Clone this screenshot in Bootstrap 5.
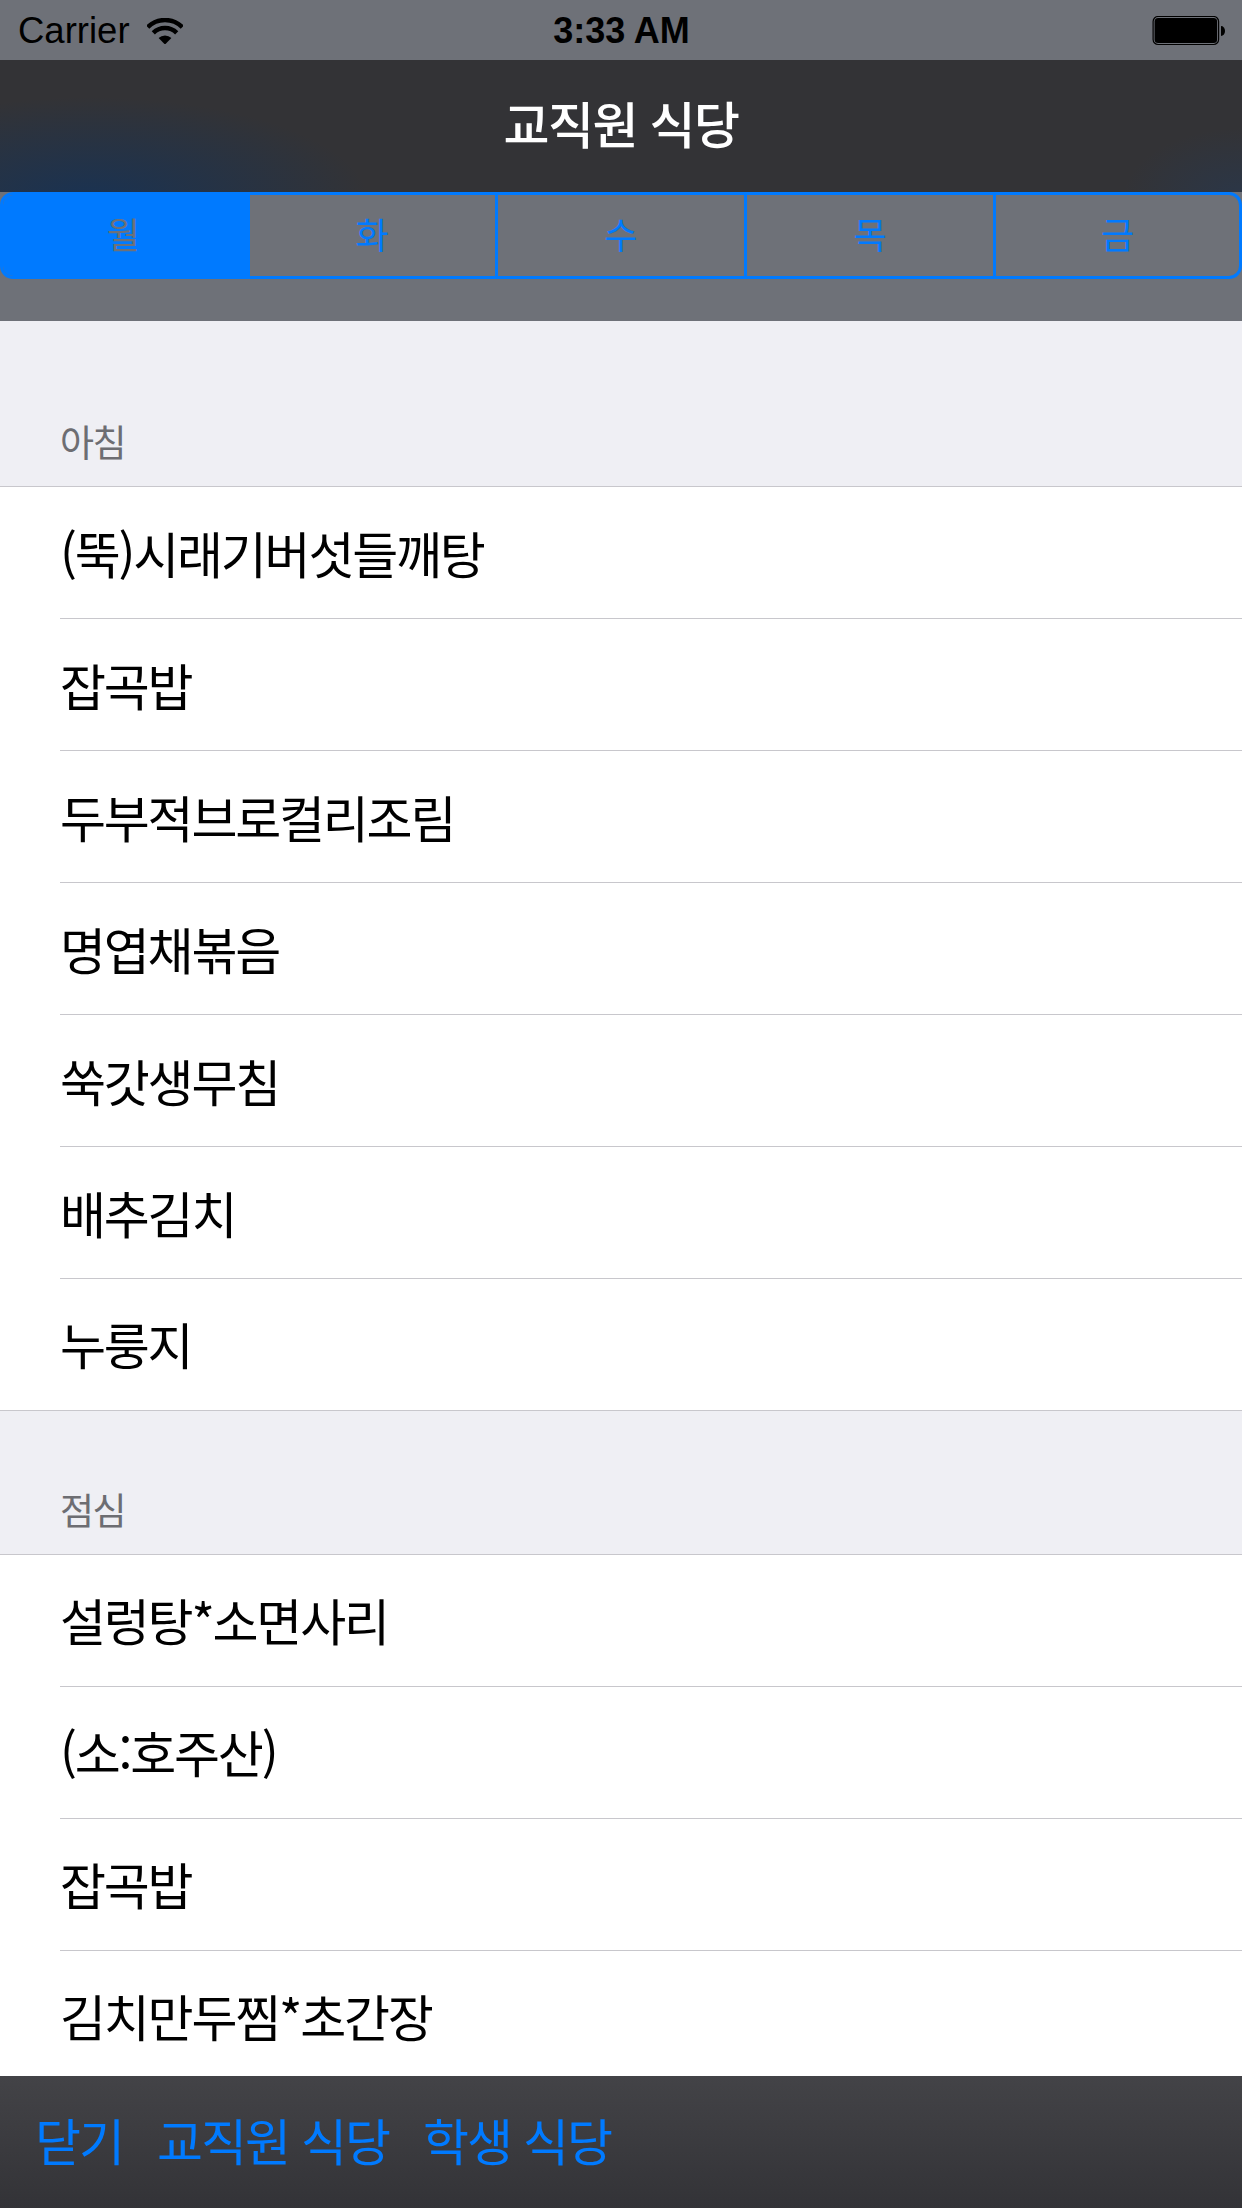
<!DOCTYPE html>
<html lang="ko">
<head>
<meta charset="utf-8">
<title>교직원 식당</title>
<link href="https://cdn.jsdelivr.net/npm/bootstrap@5.3.0/dist/css/bootstrap.min.css" rel="stylesheet">
<style>
html,body{margin:0;padding:0;}
body{width:1242px;height:2208px;overflow:hidden;background:#efeff4;font-family:"Noto Sans CJK KR","Liberation Sans",sans-serif;}
.status-strip{height:60px;background:#6e7178;color:#000;font-family:"Liberation Sans",sans-serif;font-size:36.5px;line-height:60px;padding:2px 17px 0 18px;}
.status-side{width:300px;}
.status-time{font-weight:700;font-size:36px;}
.wifi-ico{width:36px;height:26px;margin-left:17px;margin-top:-1px;}
.batt-ico{width:74px;height:30px;}
.title-bar{height:132px;padding-bottom:8px;color:#fff;font-size:50px;font-weight:500;letter-spacing:-1.5px;
 background:radial-gradient(ellipse 280px 105px at 90px 142px,rgba(20,50,88,.85),rgba(20,50,88,0)),radial-gradient(ellipse 120px 72px at 1242px 140px,rgba(30,60,100,.4),rgba(30,60,100,0)),#333336;background-repeat:no-repeat;}
.seg-wrap{height:129px;background:#6e7178;}
.seg-box{height:87px;border:3px solid #007aff;border-radius:13px;overflow:hidden;display:grid;grid-template-columns:243.5px 248px 249.5px 249px 1fr;}
.seg-cell{font-size:36px;padding-bottom:5px;color:#007aff;border-left:3px solid #007aff;}
.seg-cell:first-child{border-left:0;padding-right:3px;background:#007aff;color:#6e7178;}
.menu-scroll{flex:1 1 0;min-height:0;overflow:hidden;}
.sect-head{padding:0 60px;color:#6d6d72;font-size:37px;letter-spacing:-1.6px;line-height:1;border-bottom:1.5px solid #c8c7cc;}
.sect-first{height:166px;padding-top:102px;}
.sect-next{height:144px;padding-top:80px;}
.menu-list{border-bottom:1.5px solid #c8c7cc;border-radius:0;background:#fff;}
.menu-row{height:132px;padding:0 0 0 60px;border:0;background:#fff;font-size:50px;letter-spacing:-2.2px;color:#000;}
.menu-inner{height:132px;padding-bottom:1px;border-bottom:1.5px solid #c8c7cc;}
.menu-row:last-child{height:130.5px;}
.menu-row:last-child .menu-inner{height:130.5px;border-bottom:0;}
.tool-bar{height:132px;padding:0 35px 6px;gap:34px;background:linear-gradient(#434347,#333337);color:#007aff;font-size:50px;letter-spacing:-2px;}
.tool-link{color:#007aff;text-decoration:none;}
</style>
</head>
<body class="d-flex flex-column">
<div class="status-strip d-flex justify-content-between align-items-center flex-shrink-0">
  <div class="status-side d-flex align-items-center"><span>Carrier</span>
    <svg class="wifi-ico" viewBox="0 0 36 26"><path d="M.7 9.200A24.500 24.500 0 0 1 35.300 9.200M6.300 14.800A16.500 16.500 0 0 1 29.700 14.800" fill="none" stroke="#000" stroke-width="4.500"/><path d="M18 26.500L11.600 20.100A9 9 0 0 1 24.400 20.100Z" fill="#000"/></svg>
  </div>
  <div class="status-time">3:33 AM</div>
  <div class="status-side d-flex justify-content-end">
    <svg class="batt-ico" viewBox="0 0 74 30"><rect x="2.100" y=".5" width="65.500" height="28" rx="5" fill="none" stroke="#000" stroke-width="1.200"/><rect x="3.600" y="2" width="62.500" height="25" rx="3.500" fill="#000"/><path d="M70 10a4 5 0 0 1 0 10Z" fill="#000"/></svg>
  </div>
</div>
<div class="title-bar d-flex justify-content-center align-items-center flex-shrink-0">교직원 식당</div>
<div class="seg-wrap flex-shrink-0">
  <div class="seg-box">
    <div class="seg-cell d-flex justify-content-center align-items-center">월</div>
    <div class="seg-cell d-flex justify-content-center align-items-center">화</div>
    <div class="seg-cell d-flex justify-content-center align-items-center">수</div>
    <div class="seg-cell d-flex justify-content-center align-items-center">목</div>
    <div class="seg-cell d-flex justify-content-center align-items-center">금</div>
  </div>
</div>
<div class="menu-scroll">
  <div class="sect-head sect-first">아침</div>
  <ul class="list-group list-group-flush menu-list">
    <li class="list-group-item menu-row"><div class="menu-inner d-flex align-items-center">(뚝)시래기버섯들깨탕</div></li>
    <li class="list-group-item menu-row"><div class="menu-inner d-flex align-items-center">잡곡밥</div></li>
    <li class="list-group-item menu-row"><div class="menu-inner d-flex align-items-center">두부적브로컬리조림</div></li>
    <li class="list-group-item menu-row"><div class="menu-inner d-flex align-items-center">명엽채볶음</div></li>
    <li class="list-group-item menu-row"><div class="menu-inner d-flex align-items-center">쑥갓생무침</div></li>
    <li class="list-group-item menu-row"><div class="menu-inner d-flex align-items-center">배추김치</div></li>
    <li class="list-group-item menu-row"><div class="menu-inner d-flex align-items-center">누룽지</div></li>
  </ul>
  <div class="sect-head sect-next">점심</div>
  <ul class="list-group list-group-flush menu-list">
    <li class="list-group-item menu-row"><div class="menu-inner d-flex align-items-center">설렁탕*소면사리</div></li>
    <li class="list-group-item menu-row"><div class="menu-inner d-flex align-items-center">(소:호주산)</div></li>
    <li class="list-group-item menu-row"><div class="menu-inner d-flex align-items-center">잡곡밥</div></li>
    <li class="list-group-item menu-row"><div class="menu-inner d-flex align-items-center">김치만두찜*초간장</div></li>
  </ul>
</div>
<div class="tool-bar d-flex align-items-center flex-shrink-0">
  <a class="tool-link" href="#">닫기</a>
  <a class="tool-link" href="#">교직원 식당</a>
  <a class="tool-link" href="#">학생 식당</a>
</div>
<script src="https://cdn.jsdelivr.net/npm/bootstrap@5.3.0/dist/js/bootstrap.bundle.min.js"></script>
</body>
</html>
